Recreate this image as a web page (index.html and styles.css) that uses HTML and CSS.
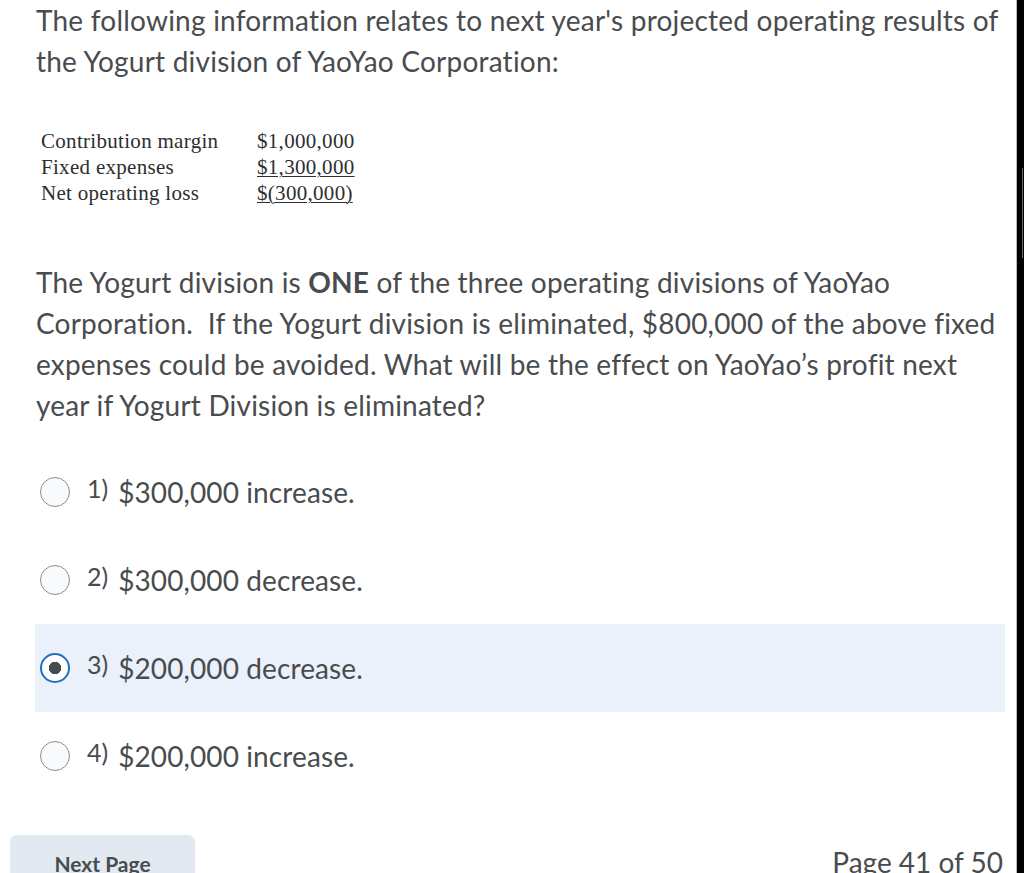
FILE: index.html
```html
<!DOCTYPE html>
<html>
<head>
<meta charset="utf-8">
<link rel="stylesheet" href="styles.css">
</head>
<body>
<div class="frame">
  <main class="page">
    <p class="intro">The following information relates to next year's projected operating results of the Yogurt division of YaoYao Corporation:</p>
    <div class="figures">
      <span class="label">Contribution margin</span><span class="amount">$1,000,000</span>
      <span class="label">Fixed expenses</span><span class="amount under">$1,300,000</span>
      <span class="label">Net operating loss</span><span class="amount under">$(300,000)</span>
    </div>
    <p class="question">The Yogurt division is <b>ONE</b> of the three operating divisions of YaoYao Corporation.&nbsp; If the Yogurt division is eliminated, $800,000 of the above fixed expenses could be avoided. What will be the effect on YaoYao’s profit next year if Yogurt Division is eliminated?</p>
    <ul class="options">
      <li class="option"><span class="radio"></span><span class="num">1)</span><span class="text">$300,000 increase.</span></li>
      <li class="option"><span class="radio"></span><span class="num">2)</span><span class="text">$300,000 decrease.</span></li>
      <li class="option selected"><span class="radio"></span><span class="num">3)</span><span class="text">$200,000 decrease.</span></li>
      <li class="option"><span class="radio"></span><span class="num">4)</span><span class="text">$200,000 increase.</span></li>
    </ul>
    <div class="footer">
      <button class="next">Next Page</button>
      <span class="pageno">Page 41 of 50</span>
    </div>
  </main>
  <div class="edge"><div class="thumb"></div></div>
</div>
</body>
</html>
```
FILE: styles.css
```css
html, body {
  margin: 0;
  padding: 0;
  background: #ffffff;
  overflow: hidden;
}
body {
  width: 1024px;
  height: 873px;
  font-family: Lato, "Open Sans", sans-serif;
  color: #494c4e;
}
.frame {
  display: flex;
  height: 873px;
}
.page {
  flex: 1;
  border-right: 1px solid #b9b9b9;
  overflow: hidden;
}
.edge {
  width: 7px;
  background: #000;
  position: relative;
}
.thumb {
  position: absolute;
  right: 1px;
  top: 168px;
  width: 1px;
  height: 90px;
  background: #6a6a6a;
}
.intro {
  margin: 0;
  padding: 0 0 0 36px;
  width: 975px;
  font-size: 28px;
  line-height: 41px;
  letter-spacing: 0.22px;
}
.figures {
  display: grid;
  grid-template-columns: 216px auto;
  justify-content: start;
  margin: 46px 0 0 41px;
  font-family: "Liberation Serif", "Times New Roman", serif;
  font-size: 21px;
  line-height: 26px;
  color: #2e2e2e;
}
.label {
  letter-spacing: 0.3px;
}
.amount {
  letter-spacing: 0.3px;
}
.under {
  text-decoration: underline;
  text-decoration-thickness: 1px;
  text-underline-offset: 2px;
}
.question {
  margin: 56px 0 0 0;
  padding: 0 0 0 36px;
  width: 975px;
  font-size: 28px;
  line-height: 41px;
  letter-spacing: 0.2px;
}
.question b {
  font-weight: 700;
}
.options {
  list-style: none;
  margin: 22px 0 0 35px;
  padding: 0;
  width: 970px;
}
.option {
  display: flex;
  align-items: center;
  height: 88px;
  padding-left: 5px;
}
.option.selected {
  background: #eaf1fb;
}
.radio {
  box-sizing: border-box;
  width: 30px;
  height: 30px;
  border-radius: 50%;
  border: 1.5px solid #8a8d90;
  background: #f9fafb;
  flex: none;
  margin-right: 17px;
}
.selected .radio {
  border: 2.5px solid #1f6fc0;
  background: radial-gradient(circle, #494c4e 0 6px, #ffffff 6.5px);
}
.num {
  font-size: 25px;
  margin-right: 10px;
  position: relative;
  top: -4px;
}
.text {
  font-size: 28px;
  letter-spacing: 0.1px;
}
.footer {
  display: flex;
  justify-content: space-between;
  align-items: flex-start;
  margin: 35px 0 0 0;
  padding: 0 0 0 10px;
}
.next {
  width: 185px;
  height: 60px;
  border: none;
  border-radius: 7px 7px 0 0;
  background: #e3e9f1;
  font-family: Lato, sans-serif;
  font-size: 21px;
  line-height: 25px;
  font-weight: 700;
  color: #494c4e;
  padding: 16px 0 0 0;
  text-align: center;
  display: flex;
  justify-content: center;
  align-items: flex-start;
}
.pageno {
  font-size: 28px;
  line-height: 34px;
  padding-top: 10px;
  padding-right: 13px;
}
```
